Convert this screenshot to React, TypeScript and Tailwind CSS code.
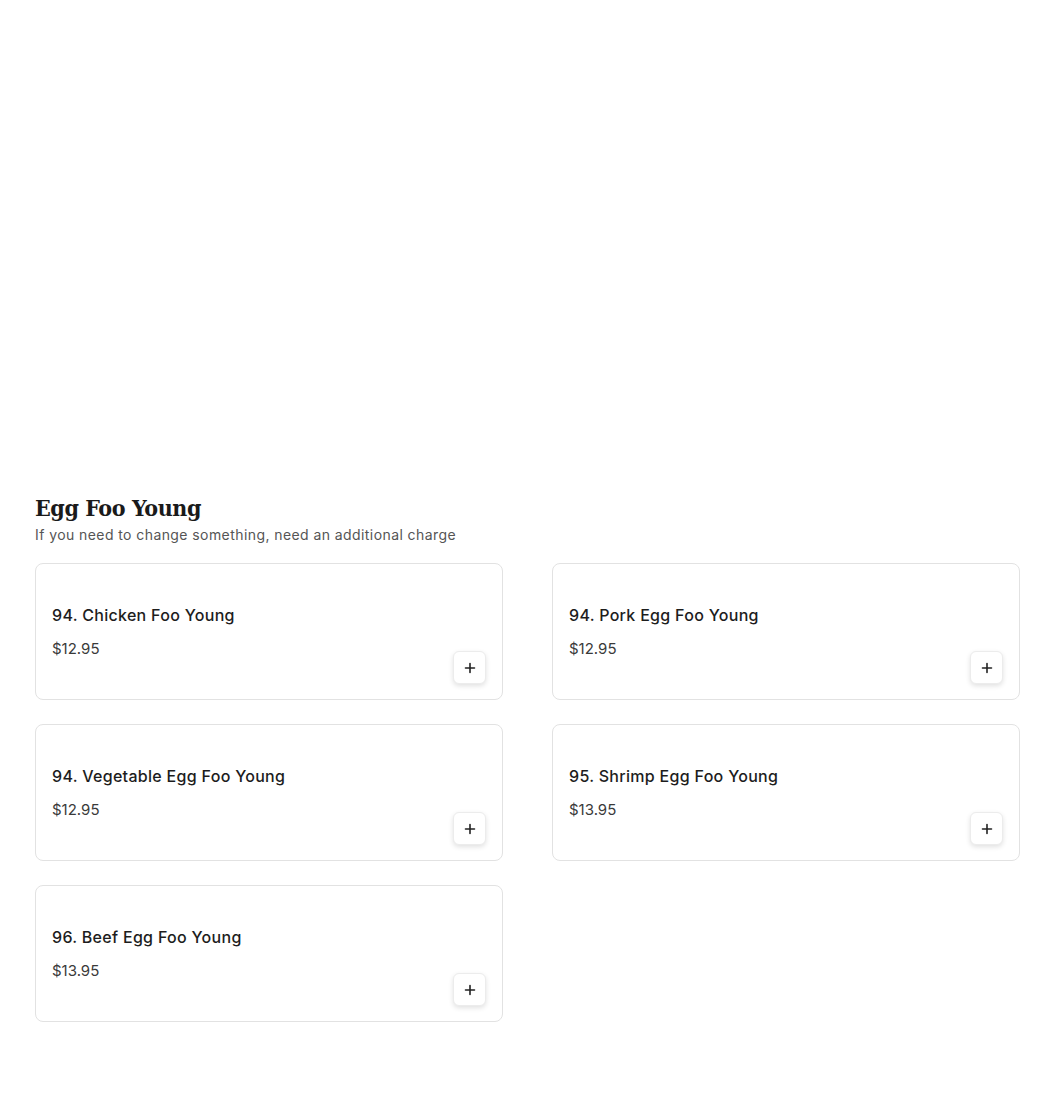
import React from 'react';

type Dish = { name: string; price: string };

const dishes: Dish[] = [
    { name: '94. Chicken Foo Young', price: '$12.95' },
    { name: '94. Pork Egg Foo Young', price: '$12.95' },
    { name: '94. Vegetable Egg Foo Young', price: '$12.95' },
    { name: '95. Shrimp Egg Foo Young', price: '$13.95' },
    { name: '96. Beef Egg Foo Young', price: '$13.95' },
];

const PlusIcon = () => (
    <svg width="12" height="12" viewBox="0 0 12 12" fill="none">
        <path d="M6 1.5v9M1.5 6h9" stroke="#222" strokeWidth="1.6" strokeLinecap="round" />
    </svg>
);

const DishCard: React.FC<{ dish: Dish }> = ({ dish }) => (
    <div className="flex justify-between h-[137px] rounded-lg border border-[#e2e2e2] bg-white pl-[16px] pr-[16px] pt-[39px] pb-[15px]">
        <div className="flex flex-col">
            <h3 className="text-[16px] leading-6 font-medium text-[#1d1d1d] tracking-[0.3px]">{dish.name}</h3>
            <p className="mt-[10px] text-[15px] leading-6 text-[#3a3a3a]">{dish.price}</p>
        </div>
        <button className="self-end w-[33px] h-[33px] rounded-md border border-[#ececec] bg-white shadow-[0_2px_5px_rgba(0,0,0,0.12)] flex items-center justify-center">
            <PlusIcon />
        </button>
    </div>
);

const App: React.FC = () => {
    return (
        <div className="min-h-[1097px] bg-white pl-[35px] pr-[30px] pt-[494px] pb-10 font-['Inter','Liberation_Sans',sans-serif]">
            <h2 className="font-['DejaVu_Serif_Condensed','DejaVu_Serif',serif] font-black text-[23px] leading-[28px] text-[#1a1a1a] tracking-[-0.4px]">
                Egg Foo Young
            </h2>
            <p className="mt-[3px] text-[14px] leading-5 text-[#555] tracking-[0.42px]">
                If you need to change something, need an additional charge
            </p>
            <div className="mt-[18px] grid grid-cols-2 gap-x-[49px] gap-y-[24px]">
                {dishes.map(d => (
                    <DishCard key={d.name} dish={d} />
                ))}
            </div>
        </div>
    );
};

export default App;
